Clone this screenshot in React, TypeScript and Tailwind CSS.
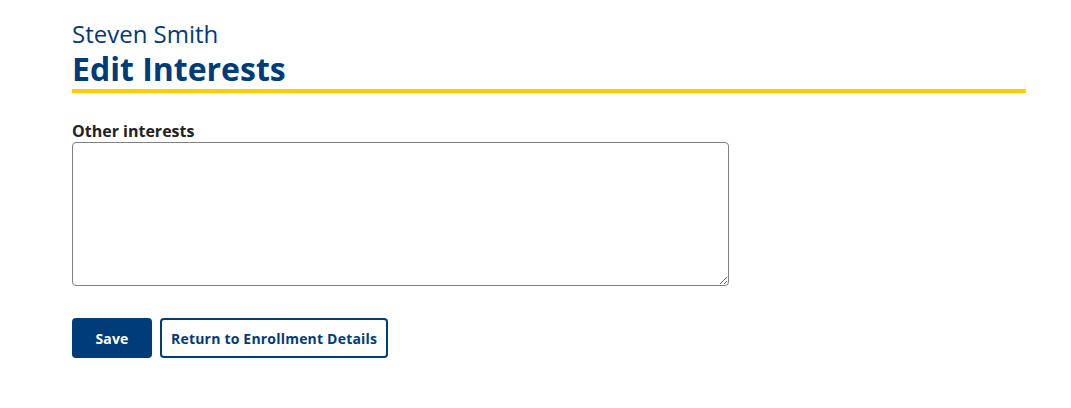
import React from "react";

export default function App() {
  return (
    <div className="min-h-[408px] bg-white px-[72px] pt-[18px]" style={{ fontFamily: '"Open Sans", sans-serif' }}>
      <div className="w-[954px]">
        <div className="text-[24px] leading-[32px] font-normal text-[#003b7a]">Steven Smith</div>
        <h1 className="text-[32px] leading-[38px] font-bold text-[#003b7a]">Edit Interests</h1>
        <div className="mt-[1px] h-[4px] bg-[#ffcd00]" />
      </div>
      <div className="mt-[27px]">
        <label className="block text-[16px] leading-[22px] font-bold text-[#222]">Other interests</label>
        <textarea className="block h-[144px] w-[657px] rounded-[4px] border border-[#808080] bg-white" />
      </div>
      <div className="mt-[32px] flex gap-[8px]">
        <button className="h-[40px] w-[80px] rounded-[4px] bg-[#003b7a] text-[14px] font-bold tracking-[0.2px] text-white">Save</button>
        <button className="h-[40px] rounded-[4px] border-2 border-[#003b7a] bg-white px-[9px] text-[14px] font-bold tracking-[0.2px] text-[#003b7a]">Return to Enrollment Details</button>
      </div>
    </div>
  );
}
